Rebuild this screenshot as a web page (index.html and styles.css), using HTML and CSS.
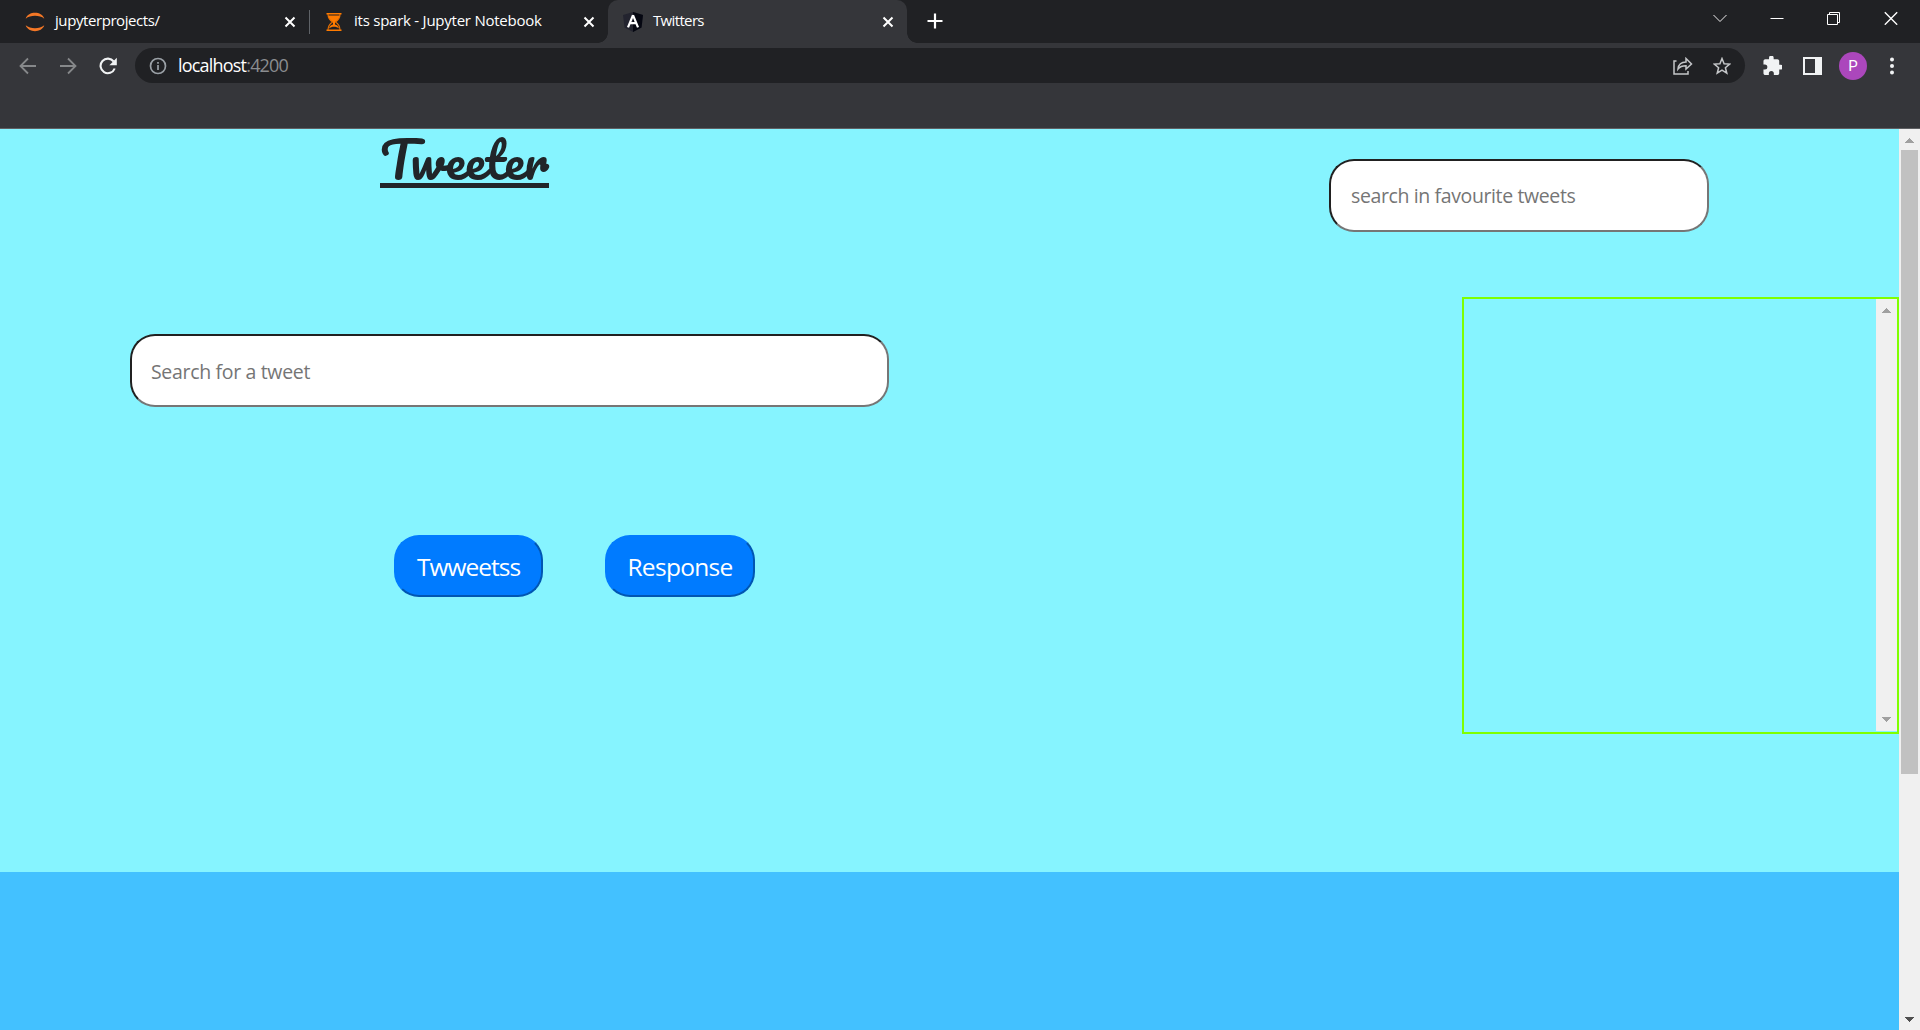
FILE: index.html
```html
<!DOCTYPE html>
<html lang="en">
<head>
<meta charset="utf-8">
<title>Twitters</title>
<link rel="stylesheet" href="styles.css">
</head>
<body>
<header class="browser">
  <div class="tabstrip">
    <div class="tab first">
      <svg class="favicon" viewBox="0 0 20 20"><path d="M.7 6.7C3.2-1.2 16.8-1.2 19.3 6.7 14.500 2.900 5.500 2.900.7 6.700zM.7 13.300C3.200 21.200 16.800 21.200 19.300 13.300 14.500 17.100 5.500 17.100.7 13.300z" fill="#f37726"/></svg>
      <span class="tab-title t1">jupyterprojects/</span>
      <svg class="close" viewBox="0 0 12 12"><path d="M1.500 1.500l9 9M10.500 1.500l-9 9"/></svg>
    </div>
    <div class="tab second">
      <svg class="favicon hourglass" viewBox="0 0 20 20"><path d="M2.500 1h15v1.500h-15zM2.500 17.500h15V19h-15z" fill="#ff7b00"/><path d="M4 2c0 4.500 2 6.300 4.500 8C6 11.700 4 13.500 4 18M16 2c0 4.500-2 6.300-4.500 8 2.500 1.700 4.500 3.500 4.500 8" fill="none" stroke="#e87000" stroke-width="1.200"/><path d="M4.500 3.500h11c0 3-2 5-4.500 6.500v2.500c2 .5 3.500 1.800 4 4-2.500-2.500-7.500-2.500-10 0 .5-2.200 2-3.500 4-4V10C6.500 8.500 4.500 6.500 4.500 3.500z" fill="#ff7b00"/></svg>
      <span class="tab-title t2">its spark - Jupyter Notebook</span>
      <svg class="close" viewBox="0 0 12 12"><path d="M1.500 1.500l9 9M10.500 1.500l-9 9"/></svg>
    </div>
    <div class="tab active">
      <svg class="favicon" viewBox="0 0 20 20"><path d="M10 0l10 3-1.500 12.500L10 20l-8.500-4.500L0 3z" fill="#23242f"/><path d="M10 0l10 3-1.500 12.500L10 20z" fill="#050711"/><path d="M10 3.200L5 15.300M10 3.200l5 12.100M7 11.200h6" stroke="#fff" stroke-width="2.200" fill="none"/></svg>
      <span class="tab-title t3">Twitters</span>
      <svg class="close" viewBox="0 0 12 12"><path d="M1.500 1.500l9 9M10.500 1.500l-9 9"/></svg>
    </div>
    <svg class="newtab" viewBox="0 0 16 16"><path d="M8 .5v15M.5 8h15"/></svg>
    <div class="window-controls">
      <svg viewBox="0 0 14 14"><path d="M.5 4L7 10.500 13.500 4" stroke="#eee"/></svg>
      <svg viewBox="0 0 14 14"><path d="M.5 7.500h13"/></svg>
      <svg viewBox="0 0 14 14"><path d="M.5 3.500h10v10H.5zM2.500 3V1.500h10v10h-2"/></svg>
      <svg viewBox="0 0 14 14"><path d="M.8 1.300l12.400 12.400M13.200 1.300L.8 13.700" stroke-width="1.400"/></svg>
    </div>
  </div>
  <div class="toolbar">
    <div class="nav">
      <svg viewBox="0 0 18 18" class="dim"><path d="M17 9H2M9 1.500L1.500 9 9 16.500"/></svg>
      <svg viewBox="0 0 18 18" class="dim"><path d="M1 9h15M9 1.500L16.500 9 9 16.500"/></svg>
      <svg viewBox="0 0 18 18"><path d="M15.700 11.500A7.300 7.300 0 1 1 14.700 4.500" stroke-width="2.100"/><path d="M17.800.8v7.400h-7.400z" fill="#f1f3f4" stroke="none"/></svg>
    </div>
    <div class="omnibox">
      <svg class="info" viewBox="0 0 18 18"><circle cx="9" cy="9" r="7.500"/><path d="M9 8v5M9 5v1.800"/></svg>
      <span class="url">localhost<span class="port">:4200</span></span>
      <svg class="share" viewBox="0 0 20 18"><path d="M3.500 4H1v13h14v-3M5 12c.5-4.500 3.500-7 8-7V1.500L18.500 7 13 12V8.800c-3.500 0-6 .7-8 3.200z"/></svg>
      <svg class="star" viewBox="0 0 18 18"><path d="M9 1.500l2.100 5.200 5.600.4-4.300 3.600 1.400 5.500L9 13.200l-4.800 3 1.400-5.500-4.300-3.600 5.600-.4z"/></svg>
    </div>
    <svg class="ext" viewBox="1.500 1.500 20.500 20.500"><path d="M20.500 11H19V7c0-1.100-.9-2-2-2h-4V3.500a2.500 2.500 0 0 0-5 0V5H4c-1.100 0-2 .9-2 2v3.800h1.500a2.700 2.700 0 0 1 0 5.400H2V20c0 1.100.9 2 2 2h3.800v-1.500a2.700 2.700 0 0 1 5.400 0V22H17c1.100 0 2-.9 2-2v-4h1.500a2.500 2.500 0 0 0 0-5z" fill="#f1f3f4"/></svg>
    <span class="sidepanel"></span>
    <span class="avatar">P</span>
    <svg class="menu" viewBox="0 0 6 18"><circle cx="3" cy="2.500" r="2"/><circle cx="3" cy="9" r="2"/><circle cx="3" cy="15.500" r="2"/></svg>
  </div>
</header>
<div class="viewport">
  <main class="page">
    <section class="hero">
      <div class="left">
        <h1 class="brand"><span>Tweeter</span></h1>
        <input class="field search" type="text" placeholder="Search for a tweet">
        <div class="actions">
          <button class="btn b1">Twweetss</button>
          <button class="btn b2">Response</button>
        </div>
      </div>
      <div class="right">
        <input class="field favourite" type="text" placeholder="search in favourite tweets">
        <div class="listbox">
          <div class="scrollbar inner">
            <svg viewBox="0 0 9 5" shape-rendering="crispEdges"><path d="M0 5L4.500 0 9 5z"/></svg>
            <svg viewBox="0 0 9 5" shape-rendering="crispEdges"><path d="M0 0h9L4.500 5z"/></svg>
          </div>
        </div>
      </div>
    </section>
  </main>
  <div class="scrollbar outer">
    <svg viewBox="0 0 9 5" shape-rendering="crispEdges"><path d="M0 5L4.500 0 9 5z"/></svg>
    <div class="thumb"></div>
    <svg class="down" viewBox="0 0 9 5" shape-rendering="crispEdges"><path d="M0 0h9L4.500 5z"/></svg>
  </div>
</div>
</body>
</html>
```
FILE: styles.css
```css
* { box-sizing: border-box; }
body {
  margin: 0;
  width: 1920px;
  height: 1030px;
  display: flex;
  flex-direction: column;
  overflow: hidden;
  font-family: "Segoe UI", "Open Sans", "Noto Sans", sans-serif;
}
svg { display: block; flex: none; }

/* Browser chrome */
.browser { height: 129px; flex: none; background: #35363a; border-bottom: 1px solid #5f6063; }
.tabstrip { height: 43px; background: #202124; display: flex; padding-left: 10px; }
.tab { position: relative; height: 43px; display: flex; align-items: center; padding: 0 15px; width: 299px; color: #fff; font-size: 15px; }
.tab.first { width: 300px; }
.tab.second { width: 298px; }
.tab.first::after { content: ""; position: absolute; right: 0; top: 10px; width: 1px; height: 24px; background: #5f6368; }
.tab.active { background: #35363a; border-radius: 10px 10px 0 0; padding-right: 13px; }
.tab.active::before, .tab.active::after { content: ""; position: absolute; bottom: 0; width: 10px; height: 10px; }
.tab.active::before { left: -10px; background: radial-gradient(circle at 0 0, transparent 9.500px, #35363a 10px); }
.tab.active::after { right: -10px; background: radial-gradient(circle at 100% 0, transparent 9.500px, #35363a 10px); }
.favicon { width: 20px; height: 20px; margin-right: 10px; }
.hourglass { margin: 0 10px 0 -1px; }
.tab-title { flex: 1; white-space: nowrap; line-height: 20px; margin-top: -4px; }
.t1 { letter-spacing: -0.42px; }
.t2 { letter-spacing: -0.24px; }
.t3 { letter-spacing: -0.65px; }
.close { width: 12px; height: 12px; stroke: #fff; stroke-width: 2; }
.tab.first .close { margin-right: -1px; }
.tab.second .close { margin-right: -2px; }
.newtab { width: 16px; height: 16px; margin: 13px 0 0 20px; stroke: #fff; stroke-width: 2.200; }
.window-controls { margin: 11px 22px 0 auto; display: flex; gap: 43px; height: 14px; }
.window-controls svg { width: 14px; height: 14px; fill: none; stroke: #fff; stroke-width: 1; }
.toolbar { height: 45px; display: flex; align-items: center; padding-left: 19px; }
.nav { width: 116px; display: flex; gap: 22px; }
.nav svg { width: 18px; height: 18px; fill: none; stroke: #f1f3f4; stroke-width: 1.800; }
.nav .dim { stroke: #86888a; }
.omnibox { width: 1610px; height: 35px; border-radius: 18px; background: #202124; display: flex; align-items: center; padding: 0 14px; }
.info { width: 18px; height: 18px; fill: none; stroke: #9aa0a6; stroke-width: 1.700; margin-right: 11px; }
.url { color: #fff; font-size: 18px; letter-spacing: -0.8px; line-height: 24px; margin-top: -1px; }
.port { color: #8b8d90; }
.share { width: 20px; height: 18px; margin-left: auto; margin-right: 20px; }
.star { width: 18px; height: 18px; }
.share, .star { fill: none; stroke: #c4c6c8; stroke-width: 1.500; }
.ext { width: 19px; height: 19px; margin: 0 21px 0 18px; }
.sidepanel { width: 19px; height: 18px; border: 2px solid #f1f3f4; border-right-width: 7px; }
.avatar { width: 28px; height: 28px; border-radius: 50%; background: #ab47bc; color: #fff; font: 15px/28px Roboto, sans-serif; text-align: center; margin: 0 22px 0 17px; }
.menu { width: 6px; height: 18px; fill: #f1f3f4; }

/* Page */
.viewport { flex: 1; display: flex; }
.page { width: 1899px; background: #43c1ff; }
.hero { height: 743px; background: #86f4ff; display: flex; justify-content: space-between; }
.left { padding-left: 130px; }
.brand { margin: 0 0 0 250px; width: 169px; height: 59px; border-bottom: 5px solid #212529; font: 500 50px/60px Pacifico, Lato, cursive; color: #212529; white-space: nowrap; }
.field { display: block; height: 73px; border: 2px solid; border-color: #212121 #767676 #767676 #212121; border-radius: 25px; background: #fff; padding: 2px 20px 0 19px; font-family: inherit; font-size: 19.5px; outline: none; }
.field::placeholder { color: #757575; opacity: 1; }
.search { width: 759px; margin-top: 146px; letter-spacing: -0.33px; }
.actions { display: flex; gap: 62px; padding: 128px 0 0 264px; }
.btn { width: 149px; height: 62px; padding: 0; border: 2px solid; border-color: #007bff #0056b3 #0056b3 #007bff; border-radius: 25px; background: #007bff; color: #fff; font-family: inherit; font-size: 24.5px; }
.b1 { letter-spacing: -0.98px; }
.b2 { width: 150px; letter-spacing: -0.7px; }
.right { width: 570px; padding-top: 30px; }
.favourite { width: 380px; padding: 0 20px; letter-spacing: -0.38px; }
.listbox { width: 437px; height: 437px; margin: 65px 0 0 auto; border: 2px solid #7fff00; display: flex; justify-content: flex-end; }
.scrollbar { width: 21px; background: #f0f0f0; display: flex; flex-direction: column; align-items: center; }
.scrollbar svg { width: 9px; height: 5px; fill: #a0a0a0; }
.inner { width: 21px; height: 432px; justify-content: space-between; padding: 9px 0; }
.outer { padding-top: 9px; }
.thumb { width: 17px; height: 624px; margin-top: 7px; background: #c1c1c1; }
.scrollbar .down { fill: #505050; margin: auto 0 8px; }
```
